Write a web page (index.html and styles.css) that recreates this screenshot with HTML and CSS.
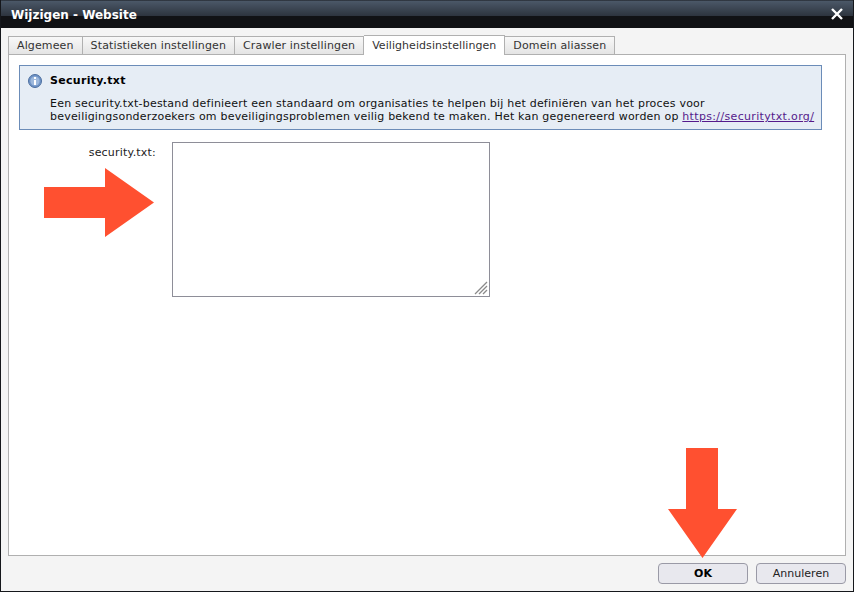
FILE: index.html
```html
<!DOCTYPE html>
<html lang="nl">
<head>
    <meta charset="UTF-8">
    <title>Wijzigen - Website</title>
    <link rel="stylesheet" href="styles.css">
</head>
<body>

<div class="dialog">
    <div class="dialog-header">
        <span class="dialog-title">Wijzigen - Website</span>
        <svg class="dialog-close" width="14" height="14" viewBox="0 0 14 14">
            <path d="M2 2 L12 12 M12 2 L2 12" stroke="#fff" stroke-width="2.4" fill="none"/>
        </svg>
    </div>

    <div class="dialog-body">
        <div class="tabs">
            <span class="tab">Algemeen</span>
            <span class="tab">Statistieken instellingen</span>
            <span class="tab">Crawler instellingen</span>
            <span class="tab tab-active">Veiligheidsinstellingen</span>
            <span class="tab">Domein aliassen</span>
        </div>

        <div class="panel">
            <div class="info-box">
                <div class="info-title">
                    <svg class="info-icon" width="14" height="14" viewBox="0 0 14 14">
                        <circle cx="7" cy="7" r="6.5" fill="#6f93c6" stroke="#4d6f9f"/>
                        <circle cx="7" cy="7" r="4.6" fill="#9db8dc"/>
                        <rect x="6" y="3" width="2" height="2" fill="#fff"/>
                        <rect x="6" y="6" width="2" height="5" fill="#fff"/>
                    </svg>
                    <strong>Security.txt</strong>
                </div>
                <p class="info-text">
                    Een security.txt-bestand definieert een standaard om organisaties te helpen bij het definiëren van het proces voor<br>
                    beveiligingsonderzoekers om beveiligingsproblemen veilig bekend te maken. Het kan gegenereerd worden op <a href="#">https://securitytxt.org/</a>
                </p>
            </div>

            <div class="form-row">
                <label class="form-label" for="security-txt">security.txt:</label>
                <div class="input-wrap">
                    <textarea class="form-input" id="security-txt"></textarea>
                    <svg class="resize-grip" width="14" height="14" viewBox="0 0 14 14">
                        <path d="M1 13 L13 1 M5 13 L13 5 M9 13 L13 9" stroke="#8a8a8a" stroke-width="1.3" fill="none"/>
                    </svg>
                </div>
            </div>
        </div>

        <div class="dialog-footer">
            <button class="btn btn-primary">OK</button>
            <button class="btn">Annuleren</button>
        </div>
    </div>

    <!-- rode pijlen liggen over de dialoog -->
    <svg class="arrow arrow-right" width="110" height="70" viewBox="0 0 110 70">
        <polygon points="0,19 61,19 61,0 110,34.500 61,69 61,50 0,50" fill="#ff5030"/>
    </svg>
    <svg class="arrow arrow-down" width="70" height="110" viewBox="0 0 70 110">
        <polygon points="18,0 50,0 50,61 69,61 34.500,110 0,61 18,61" fill="#ff5030"/>
    </svg>
</div>

</body>
</html>
```

FILE: styles.css
```css
html, body {
    margin: 0;
    padding: 0;
    height: 100%;
}

body {
    font-family: 'DejaVu Sans', Verdana, sans-serif;
    font-size: 11px;
    color: #111;
}

.dialog {
    position: relative;
    width: 854px;
    height: 592px;
    box-sizing: border-box;
    display: flex;
    flex-direction: column;
    border: 1px solid #15171b;
    border-top: 0;
    background: #f4f4f4;
    overflow: hidden;
}

.dialog-header {
    height: 28px;
    flex: none;
    display: flex;
    align-items: center;
    justify-content: space-between;
    padding: 0 9px 0 10px;
    background: linear-gradient(#15171b 0, #4b5868 1px, #2d343e 16px, #111215 16px, #111215 100%);
}

.dialog-title {
    color: #fff;
    font-size: 12px;
    font-weight: bold;
    padding-top: 2px;
}

.dialog-close {
    display: block;
}

.dialog-body {
    flex: 1;
    display: flex;
    flex-direction: column;
    min-height: 0;
    padding: 8px 7px 7px;
}

.tabs {
    display: flex;
    height: 18px;
    flex: none;
    position: relative;
    z-index: 1;
}

.tab {
    box-sizing: border-box;
    height: 19px;
    padding: 0 8px;
    line-height: 18px;
    letter-spacing: 0.13px;
    color: #333;
    background: linear-gradient(#f8f8f8, #e4e4e4);
    border: 1px solid #b0b0b0;
    border-left: 0;
    white-space: nowrap;
}

.tab:first-child {
    border-left: 1px solid #b0b0b0;
}

.tab-active {
    height: 20px;
    margin-top: -1px;
    line-height: 19px;
    letter-spacing: 0.06px;
    background: #fff;
    border-bottom: 0;
}

.panel {
    flex: 1;
    min-height: 0;
    background: #fff;
    border: 1px solid #b0b0b0;
    padding: 10px;
}

.info-box {
    width: 803px;
    height: 65px;
    box-sizing: border-box;
    background: #e6edf5;
    border: 1px solid #6b8cb8;
    padding: 7px 8px;
}

.info-title {
    display: flex;
    align-items: center;
    gap: 8px;
    height: 15px;
    color: #000;
}

.info-title strong {
    font-size: 11px;
    letter-spacing: 0.3px;
}

.info-text {
    margin: 9px 0 0 22px;
    line-height: 13px;
    letter-spacing: 0.21px;
    white-space: nowrap;
    color: #111;
}

.info-text a {
    letter-spacing: 0.34px;
    color: #551a8b;
}

.form-row {
    display: flex;
    align-items: flex-start;
    margin-top: 12px;
}

.form-label {
    width: 137px;
    text-align: right;
    padding-top: 4px;
    margin-right: 16px;
    letter-spacing: 0.2px;
    color: #222;
}

.input-wrap {
    position: relative;
    width: 318px;
    height: 155px;
}

.form-input {
    display: block;
    width: 100%;
    height: 100%;
    box-sizing: border-box;
    margin: 0;
    border: 1px solid #8e8e98;
    background: #fff;
    outline: none;
    resize: none;
}

.resize-grip {
    position: absolute;
    right: 2px;
    bottom: 2px;
}

.dialog-footer {
    display: flex;
    justify-content: flex-end;
    gap: 8px;
    flex: none;
    padding-top: 7px;
}

.btn {
    width: 90px;
    height: 21px;
    padding: 0;
    font-family: inherit;
    font-size: 11px;
    color: #222;
    background: #e8e8ee;
    border: 1px solid #9a9aa6;
    border-radius: 4px;
}

.btn-primary {
    font-weight: bold;
    color: #000;
}

.arrow {
    position: absolute;
    display: block;
}

.arrow-right {
    left: 43px;
    top: 168px;
}

.arrow-down {
    left: 667px;
    top: 448px;
}
```
